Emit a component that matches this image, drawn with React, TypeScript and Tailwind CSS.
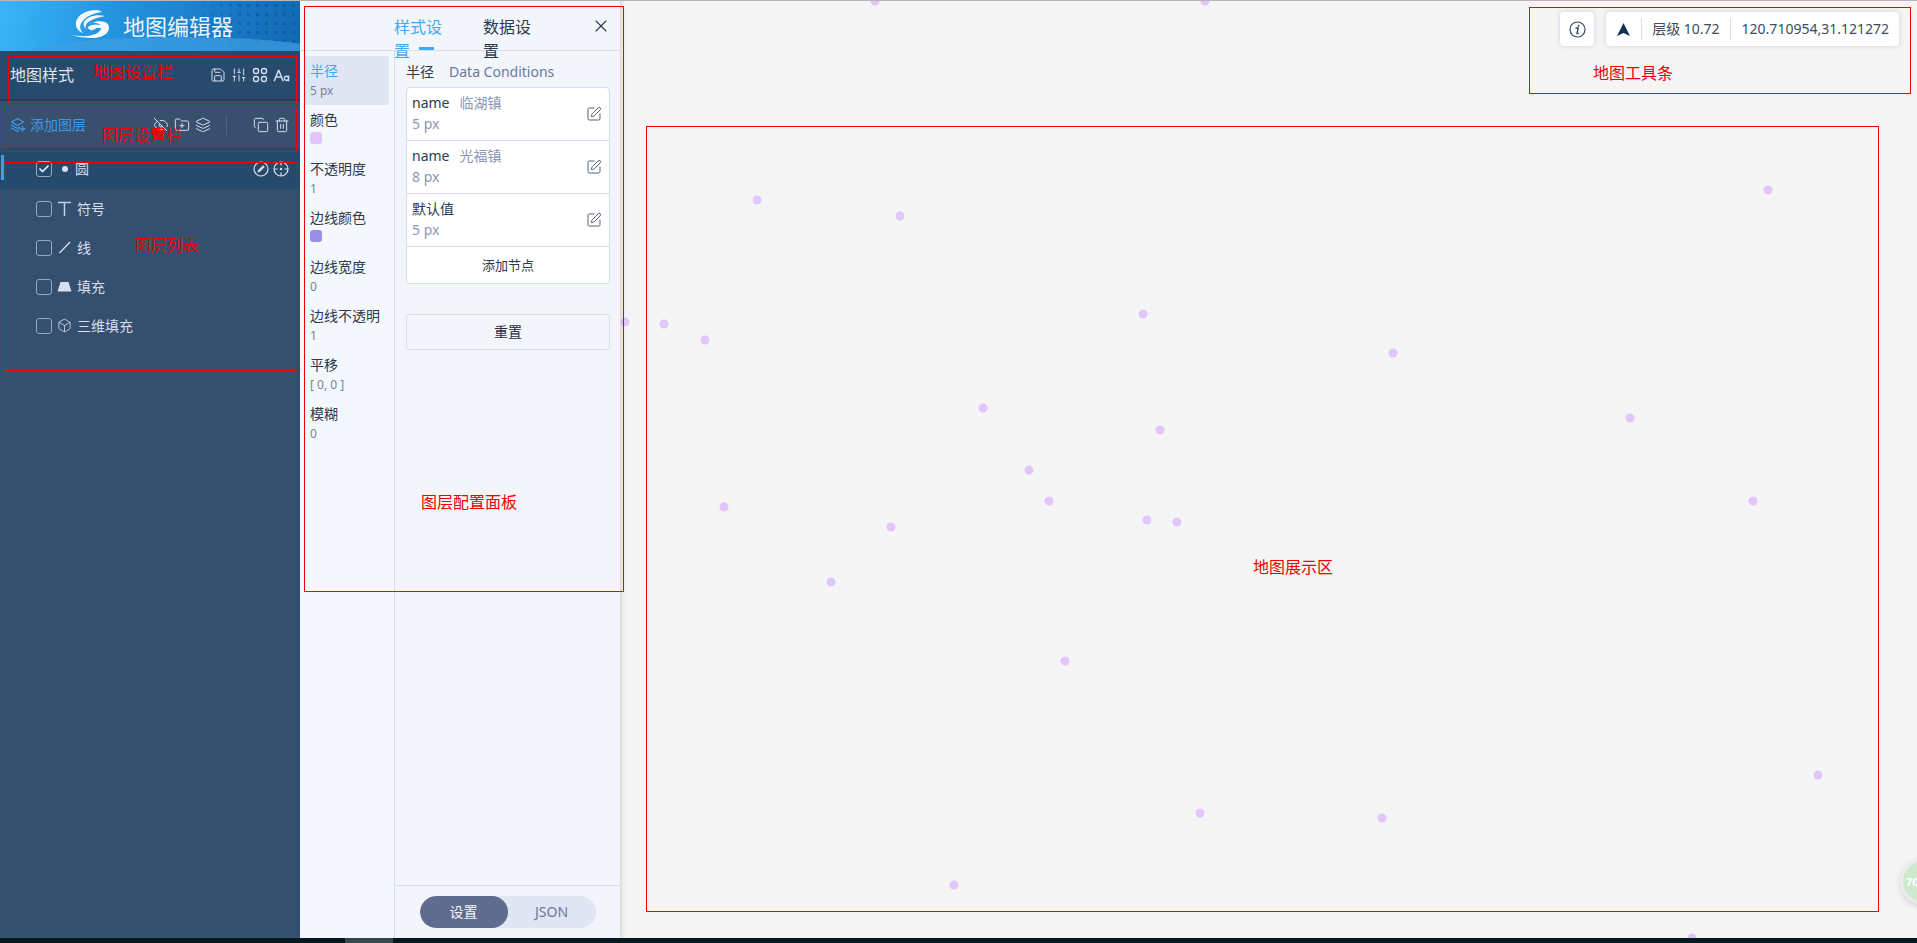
import React from 'react';
import { Save, SlidersVertical, EyeOff, FolderPlus, Layers, Copy, Trash2, Box, SquarePen, X, Check } from 'lucide-react';
import { RiFontSize } from 'react-icons/ri';

const dots = [
  [875, 1], [1205, 1], [757, 200], [900, 216], [1768, 190], [1143, 314], [1393, 353], [625, 322], [664, 324],
  [705, 340], [983, 408], [1160, 430], [1630, 418], [1029, 470], [1049, 501], [724, 507], [1753, 501], [891, 527],
  [1147, 520], [1177, 522], [831, 582], [1065, 661], [1818, 775], [1200, 813], [1382, 818], [954, 885], [1692, 938],
];

const styleItems = [
  { label: '半径', value: '5 px', active: true },
  { label: '颜色', swatch: 'bg-[#e2c5fb]' },
  { label: '不透明度', value: '1' },
  { label: '边线颜色', swatch: 'bg-[#9b90e8]' },
  { label: '边线宽度', value: '0' },
  { label: '边线不透明', value: '1' },
  { label: '平移', value: '[ 0, 0 ]' },
  { label: '模糊', value: '0' },
];

const conditions = [
  { name: 'name', town: '临湖镇', value: '5 px' },
  { name: 'name', town: '光福镇', value: '8 px' },
  { name: '默认值', town: '', value: '5 px' },
];

const Logo = () => (
  <svg width="44" height="34" viewBox="0 0 44 34" fill="#f3f8fd">
    <path d="M28 1C18 1 9 5 7 13c-1 5 2 9 7 11-3-3-4-7-1-11 4-6 12-9 20-10-2-1-3-2-5-2z" />
    <path d="M36 7c-8-2-18 0-21 6-1 3 0 5 2 7-1-3 0-6 4-8 5-3 11-4 15-5z" />
    <path d="M19 16c3-3 11-5 17-3 5 2 5 7 2 11-3 3-9 5-14 5-8 0-16-1-22-3 7 1 16 2 21 0 5-1 9-4 9-7h-5c-2 3-8 3-8-1 3-3 9-3 12-2 0-1-2-2-5-2-3-1-5 0-7 2z" />
  </svg>
);

const AddLayerIcon = () => (
  <svg width="16" height="16" viewBox="0 0 16 16" fill="none" stroke="#3b9ae6" strokeWidth="1.4" strokeLinejoin="round" strokeLinecap="round">
    <path d="M7.5 1.5 13.5 5l-6 3.5L1.500 5z" />
    <path d="M1.500 8l6 3.500 2-1.100" />
    <path d="M1.500 11l6 3.500 1-.6" />
    <path d="M12.500 9.500v5M10 12h5" />
  </svg>
);

const FourDots = () => (
  <svg width="16" height="16" viewBox="0 0 16 16" fill="none" stroke="#d5dfee" strokeWidth="1.4">
    <rect x="1.500" y="1.500" width="5" height="5" rx="2.200" />
    <rect x="9.500" y="1.500" width="5" height="5" rx="2.200" />
    <rect x="1.500" y="9.500" width="5" height="5" rx="2.200" />
    <rect x="9.500" y="9.500" width="5" height="5" rx="2.200" />
  </svg>
);

const EditCircle = () => (
  <svg width="16" height="16" viewBox="0 0 16 16" fill="none" stroke="#d5dfee" strokeWidth="1.2">
    <circle cx="8" cy="8" r="7" />
    <path d="M4.500 11.500l.7-2.500 4.800-4.800 1.800 1.800L7 10.800z" fill="#d5dfee" stroke="none" />
  </svg>
);

const TargetCircle = () => (
  <svg width="16" height="16" viewBox="0 0 16 16" fill="none" stroke="#d5dfee" strokeWidth="1.200">
    <circle cx="8" cy="8" r="7" />
    <path d="M8 1v3.500M8 11.500V15M1 8h3.500M11.500 8H15" />
    <circle cx="8" cy="8" r="1.200" fill="#d5dfee" stroke="none" />
  </svg>
);

const InfoIcon = () => (
  <svg width="17" height="17" viewBox="0 0 17 17" fill="none">
    <circle cx="8.500" cy="8.500" r="7.500" stroke="#3d4a60" strokeWidth="1.200" />
    <path d="M7 7h2.200L8 12.500h1.200" stroke="#3d4a60" strokeWidth="1.400" strokeLinecap="round" strokeLinejoin="round" />
    <circle cx="9.500" cy="4.700" r="1" fill="#3d4a60" />
  </svg>
);

const NorthIcon = () => (
  <svg width="15" height="15" viewBox="0 0 15 15" fill="#17304f">
    <path d="M7.500 1 14 14l-6.500-3L1 14z" />
  </svg>
);

const Checkbox = ({ checked }: { checked?: boolean }) => (
  <span className="flex h-[16px] w-[16px] shrink-0 items-center justify-center rounded-[3px] border-[1.5px] border-[#8fa8c8]">
    {checked && <Check size={12} strokeWidth={3.5} color="#eef3fa" />}
  </span>
);

const layers = [
  { label: '符号', icon: <span className="block h-[15px] w-[15px]"><svg width="15" height="15" viewBox="0 0 15 15" fill="none" stroke="#bcd0e8" strokeWidth="1.500"><path d="M1 1.500h13M7.500 1.500V15" /></svg></span> },
  { label: '线', icon: <svg width="15" height="15" viewBox="0 0 15 15" fill="none" stroke="#d5dfee" strokeWidth="1.300"><path d="M2.500 13 13 2" /></svg> },
  { label: '填充', icon: <svg width="15" height="15" viewBox="0 0 15 15" fill="#d5dfee"><path d="M3.500 3h8l3 9.500H0.500z" /></svg> },
  { label: '三维填充', icon: <Box size={15} color="#d5dfee" strokeWidth={1.3} /> },
];

const notes = [
  { box: 'left-[8px] top-[56px] h-[48px] w-[289px]', text: '地图设置栏', at: 'left-[93px] top-[61px]' },
  { box: 'left-[1px] top-[107px] h-[45px] w-[296px]', text: '图层设置栏', at: 'left-[102px] top-[124px]' },
  { box: 'left-[5px] top-[162px] h-[209px] w-[293px]', text: '图层列表', at: 'left-[135px] top-[234px]' },
  { box: 'left-[304px] top-[6px] h-[586px] w-[320px]', text: '图层配置面板', at: 'left-[421px] top-[491px]' },
  { box: 'left-[1529px] top-[7px] h-[87px] w-[382px]', text: '地图工具条', at: 'left-[1593px] top-[62px]' },
  { box: 'left-[646px] top-[126px] h-[786px] w-[1233px]', text: '地图展示区', at: 'left-[1253px] top-[556px]' },
];

export default function App() {
  return (
    <div className="relative flex h-[943px] w-full flex-col overflow-hidden bg-[#f5f5f5] font-['Noto_Sans','Noto_Sans_CJK_SC',sans-serif] text-sm">
      <div className="h-px bg-[#b8b8b8]" />
      <div className="flex min-h-0 flex-1">
        {/* sidebar */}
        <aside className="flex w-[300px] shrink-0 flex-col bg-[#34506e] text-[#d5dfee]">
          <div className="relative flex h-[50px] items-center overflow-hidden bg-[linear-gradient(100deg,#3ab5f7_0%,#2496e0_35%,#1a7cc9_70%,#1268b3_100%)] pl-[69px]">
            <div className="absolute inset-y-0 right-0 w-[110px] bg-[radial-gradient(circle,#0c5aa0_1.500px,transparent_2px)] bg-[length:9px_9px] opacity-70 [mask-image:linear-gradient(90deg,transparent,black_60%)]" />
            <div className="absolute -bottom-[26px] right-[-40px] h-[40px] w-[320px] rounded-[50%] bg-[#3f9fe2]/70" />
            <div className="relative"><Logo /></div>
            <span className="relative ml-[10px] text-[22px] leading-none text-[#eaf4fb]">地图编辑器</span>
          </div>

          <div className="flex h-[50px] items-center justify-between border-b-2 border-[#21405f] bg-[#284a6c] pl-[10px] pr-[10px]">
            <span className="text-base text-[#dfe7f2]">地图样式</span>
            <div className="flex items-center gap-[5px]">
              <Save size={16} strokeWidth={1.500} />
              <SlidersVertical size={16} strokeWidth={1.500} />
              <FourDots />
              <RiFontSize size={17} />
            </div>
          </div>

          <div className="flex h-[48px] items-center justify-between border-b border-[#2a4766] bg-[#384f6d] pl-[10px] pr-[10px]">
            <div className="flex items-center gap-[4px] text-[#3b9ae6]">
              <AddLayerIcon />
              <span>添加图层</span>
            </div>
            <div className="flex items-center gap-[5px]">
              <EyeOff size={16} strokeWidth={1.500} />
              <FolderPlus size={16} strokeWidth={1.500} />
              <Layers size={16} strokeWidth={1.500} />
              <span className="mx-[10px] h-[20px] w-px bg-[#4b6583]" />
              <span className="w-[6px]" />
              <Copy size={16} strokeWidth={1.500} />
              <Trash2 size={16} strokeWidth={1.500} />
            </div>
          </div>

          <div className="relative flex h-[40px] items-center bg-[#264a6c] pl-[36px] pr-[11px]">
            <span className="absolute left-[1px] top-[6px] h-[25px] w-[3px] bg-[#3f9fe8]" />
            <Checkbox checked />
            <span className="ml-[10px] h-[6px] w-[6px] rounded-full bg-[#d5dfee]" />
            <span className="ml-[7px] flex-1">圆</span>
            <div className="flex items-center gap-[4px]">
              <EditCircle />
              <TargetCircle />
            </div>
          </div>

          {layers.map((layer) => (
            <div key={layer.label} className="flex h-[39px] items-center pl-[36px]">
              <Checkbox />
              <span className="ml-[5px] flex w-[15px] justify-center">{layer.icon}</span>
              <span className="ml-[5px]">{layer.label}</span>
            </div>
          ))}
        </aside>

        {/* style panel */}
        <section className="relative z-10 flex w-[320px] shrink-0 flex-col bg-[#f2f5fa] text-[#2c3a4f] shadow-[2px_0_4px_rgba(0,0,0,0.12)]">
          <div className="relative flex h-[50px] shrink-0 items-start justify-center gap-[30px] border-b border-[#d3dfef] pl-[94px] pr-[78px] pt-[14px] text-base leading-[24px]">
            <span className="relative h-[35px] text-[#3eaaf5]">
              样式设置
              <span className="absolute bottom-0 left-[25px] h-[3px] w-[15px] bg-[#3eaaf5]" />
            </span>
            <span>数据设置</span>
            <X size={20} strokeWidth={1.300} className="absolute right-[9px] top-[15px]" />
          </div>

          <div className="flex min-h-0 flex-1">
            <div className="w-[95px] shrink-0 border-r border-[#d3dfef] bg-[#f4f7fb] pl-[5px] pr-[5px] pt-[5px]">
              {styleItems.map((item) => (
                <div key={item.label} className={`h-[49px] whitespace-nowrap pl-[5px] pt-[5px] ${item.active ? 'bg-[#e0e6f3] text-[#3eaaf5]' : ''}`}>
                  <div className="leading-[20px]">{item.label}</div>
                  {item.swatch ? (
                    <div className={`mt-[2px] h-[12px] w-[12px] rounded-[3px] ${item.swatch}`} />
                  ) : (
                    <div className="text-xs leading-[20px] text-[#7683a0]">{item.value}</div>
                  )}
                </div>
              ))}
            </div>

            <div className="flex min-w-0 flex-1 flex-col">
              <div className="flex-1 pl-[11px] pr-[10px] pt-[11px]">
                <div className="flex h-[20px] items-center gap-[15px] leading-[20px]">
                  <span>半径</span>
                  <span className="text-[#6b7a9c]">Data Conditions</span>
                </div>
                <div className="mt-[5px] rounded-[4px] border border-[#d3dfef] bg-white">
                  {conditions.map((row) => (
                    <div key={row.name + row.town} className="flex h-[53px] items-center justify-between border-b border-[#d3dfef] pl-[5px] pr-[7px]">
                      <div>
                        <div className="leading-[20px]">
                          {row.name}
                          {row.town && <span className="ml-[10px] text-[#8a97b5]">{row.town}</span>}
                        </div>
                        <div className="leading-[22px] text-[#8a97b5]">{row.value}</div>
                      </div>
                      <SquarePen size={16} strokeWidth={1.300} color="#3d4a60" />
                    </div>
                  ))}
                  <div className="flex h-[36px] items-center justify-center text-[13px]">添加节点</div>
                </div>
                <div className="mt-[30px] flex h-[36px] items-center justify-center rounded-[4px] border border-[#d3dfef] text-[#1f2d43]">重置</div>
              </div>

              <div className="flex h-[53px] shrink-0 items-start justify-center border-t border-[#d3dfef] pt-[10px]">
                <div className="flex h-[32px] w-[176px] overflow-hidden rounded-full bg-[#e0e6f3]">
                  <span className="flex w-[88px] items-center justify-center rounded-full bg-[#5f6c8f] text-[#f3f5fa]">设置</span>
                  <span className="flex w-[88px] items-center justify-center text-[#6b7a9c]">JSON</span>
                </div>
              </div>
            </div>
          </div>
        </section>

        {/* map */}
        <main className="relative min-w-0 flex-1 overflow-hidden bg-[#f5f5f5]">
          <div className="absolute right-[18px] top-[11px] z-10 flex items-stretch gap-[12px] text-[#3d4a60]">
            <div className="flex h-[34px] w-[34px] items-center justify-center rounded-[4px] bg-white shadow-[0_0_5px_rgba(120,140,180,0.35)]">
              <InfoIcon />
            </div>
            <div className="flex h-[34px] items-center rounded-[4px] bg-white pl-[10px] pr-[10px] shadow-[0_0_5px_rgba(120,140,180,0.35)]">
              <NorthIcon />
              <span className="ml-[10px] h-[22px] w-px bg-[#d3dfef]" />
              <span className="ml-[10px] whitespace-nowrap">层级 10.72</span>
              <span className="ml-[10px] h-[22px] w-px bg-[#d3dfef]" />
              <span className="ml-[11px] whitespace-nowrap">120.710954,31.121272</span>
            </div>
          </div>
          {dots.map(([x, y]) => (
            <span
              key={`${x}-${y}`}
              className="absolute h-[9px] w-[9px] -translate-x-1/2 -translate-y-1/2 rounded-full bg-[#e2c5fb]"
              style={{ left: x - 620, top: y - 1 }}
            />
          ))}
          <div className="absolute right-[-30px] top-[857px] flex h-[47px] w-[47px] items-center rounded-full border-[3px] border-[#ececec] bg-[#cfe9cf] pl-[3px] text-[11px] font-bold text-white shadow-[0_2px_6px_rgba(0,0,0,0.15)]">
            70
          </div>
        </main>
      </div>

      <div className="flex h-[5px] shrink-0 bg-[#06191f]">
        <span className="ml-[345px] w-[48px] bg-[#3a4a4a]" />
      </div>

      {/* red annotations sit on top of the page */}
      {notes.map((note) => (
        <React.Fragment key={note.text}>
          <div className={`pointer-events-none absolute z-20 border border-[#f00000] ${note.box}`} />
          <span className={`pointer-events-none absolute z-20 whitespace-nowrap text-base leading-[22px] text-[#f00000] ${note.at}`}>{note.text}</span>
        </React.Fragment>
      ))}
    </div>
  );
}
